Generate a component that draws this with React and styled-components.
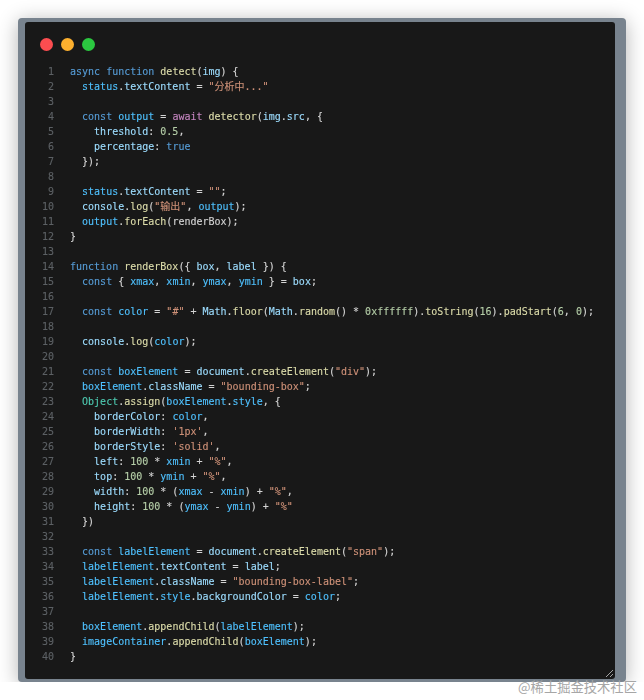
import React from "react";
import styled, { createGlobalStyle } from "styled-components";

const colors = {
  k: "#569cd6", // keyword
  c: "#c586c0", // control keyword
  f: "#dcdcaa", // function
  v: "#9cdcfe", // variable
  o: "#4fc1ff", // constant
  s: "#ce9178", // string
  n: "#b5cea8", // number
  t: "#4ec9b0", // type
};

// [[x|text]] marks a coloured token, the rest is plain text
const source = [
  `[[k|async]] [[k|function]] [[f|detect]]([[v|img]]) {`,
  `  [[o|status]].[[v|textContent]] = [[s|"分析中..."]]`,
  ``,
  `  [[k|const]] [[o|output]] = [[c|await]] [[f|detector]]([[v|img]].[[v|src]], {`,
  `    [[v|threshold]]: [[n|0.5]],`,
  `    [[v|percentage]]: [[k|true]]`,
  `  });`,
  ``,
  `  [[o|status]].[[v|textContent]] = [[s|""]];`,
  `  [[v|console]].[[f|log]]([[s|"输出"]], [[o|output]]);`,
  `  [[o|output]].[[f|forEach]](renderBox);`,
  `}`,
  ``,
  `[[k|function]] [[f|renderBox]]({ [[v|box]], [[v|label]] }) {`,
  `  [[k|const]] { [[o|xmax]], [[o|xmin]], [[o|ymax]], [[o|ymin]] } = [[v|box]];`,
  ``,
  `  [[k|const]] [[o|color]] = [[s|"#"]] + [[v|Math]].[[f|floor]]([[v|Math]].[[f|random]]() * [[n|0xffffff]]).[[f|toString]]([[n|16]]).[[f|padStart]]([[n|6]], [[n|0]]);`,
  ``,
  `  [[v|console]].[[f|log]]([[o|color]]);`,
  ``,
  `  [[k|const]] [[o|boxElement]] = [[v|document]].[[f|createElement]]([[s|"div"]]);`,
  `  [[o|boxElement]].[[v|className]] = [[s|"bounding-box"]];`,
  `  [[t|Object]].[[f|assign]]([[o|boxElement]].[[o|style]], {`,
  `    [[v|borderColor]]: [[o|color]],`,
  `    [[v|borderWidth]]: [[s|'1px']],`,
  `    [[v|borderStyle]]: [[s|'solid']],`,
  `    [[v|left]]: [[n|100]] * [[o|xmin]] + [[s|"%"]],`,
  `    [[v|top]]: [[n|100]] * [[o|ymin]] + [[s|"%"]],`,
  `    [[v|width]]: [[n|100]] * ([[o|xmax]] - [[o|xmin]]) + [[s|"%"]],`,
  `    [[v|height]]: [[n|100]] * ([[o|ymax]] - [[o|ymin]]) + [[s|"%"]]`,
  `  })`,
  ``,
  `  [[k|const]] [[o|labelElement]] = [[v|document]].[[f|createElement]]([[s|"span"]]);`,
  `  [[o|labelElement]].[[v|textContent]] = [[v|label]];`,
  `  [[o|labelElement]].[[v|className]] = [[s|"bounding-box-label"]];`,
  `  [[o|labelElement]].[[o|style]].[[v|backgroundColor]] = [[o|color]];`,
  ``,
  `  [[o|boxElement]].[[f|appendChild]]([[o|labelElement]]);`,
  `  [[o|imageContainer]].[[f|appendChild]]([[o|boxElement]]);`,
  `}`,
];

const renderLine = (line) =>
  line.split(/(\[\[\w\|.*?\]\])/).map((part, i) => {
    const match = part.match(/^\[\[(\w)\|(.*)\]\]$/);
    if (!match) return part;
    return (
      <Token key={i} $color={colors[match[1]]}>
        {match[2]}
      </Token>
    );
  });

const App = () => {
  return (
    <>
      <GlobalStyle />
      <Frame>
        <Editor>
          <Dots>
            <Dot $color="#fc4d50" />
            <Dot $color="#fdb02e" />
            <Dot $color="#2bc840" />
          </Dots>
          <Code>
            {source.map((line, i) => (
              <Row key={i}>
                <LineNumber>{i + 1}</LineNumber>
                <LineText>{renderLine(line)}</LineText>
              </Row>
            ))}
          </Code>
          <Grip width="9" height="9" viewBox="0 0 9 9">
            <path d="M1 8L8 1M5 8L8 5" stroke="#c8c8c8" strokeWidth="0.8" fill="none" />
          </Grip>
        </Editor>
      </Frame>
      <Watermark>@稀土掘金技术社区</Watermark>
    </>
  );
};

const GlobalStyle = createGlobalStyle`
  html, body {
    margin: 0;
    background: #fff;
  }
`;

const Frame = styled.div`
  box-sizing: border-box;
  width: 608px;
  height: 664px;
  margin: 18px 0 0 18px;
  padding: 4px 11px 3px 7px;
  background: #78838e;
  border-radius: 4px;
  box-shadow: 0 3px 20px rgba(0, 0, 0, 0.3);
`;

const Editor = styled.div`
  position: relative;
  height: 100%;
  background: #181818;
  border-radius: 3px;
  filter: blur(0.3px);
`;

const Dots = styled.div`
  display: flex;
  gap: 8px;
  padding: 16px 0 0 15px;
`;

const Dot = styled.span`
  width: 13px;
  height: 13px;
  border-radius: 50%;
  background: ${(p) => p.$color};
`;

const Code = styled.div`
  padding-top: 13px;
  font-family: "DejaVu Sans Mono", "Noto Sans CJK SC", monospace;
  font-size: 10px;
  line-height: 15px;
  color: #d4d4d4;
  -webkit-text-stroke: 0.12px currentColor;
`;

const Row = styled.div`
  display: flex;
  height: 15px;
`;

const LineNumber = styled.span`
  width: 29px;
  margin-right: 16px;
  text-align: right;
  color: #5c6064;
`;

const LineText = styled.span`
  white-space: pre;
`;

const Token = styled.span`
  color: ${(p) => p.$color};
`;

const Grip = styled.svg`
  position: absolute;
  right: 1px;
  bottom: 1px;
`;

const Watermark = styled.div`
  position: absolute;
  left: 518px;
  top: 679px;
  font-family: "Noto Sans CJK SC", sans-serif;
  font-size: 13.3px;
  line-height: 16px;
  color: #a6a6a6;
  white-space: nowrap;
`;

export default App;
